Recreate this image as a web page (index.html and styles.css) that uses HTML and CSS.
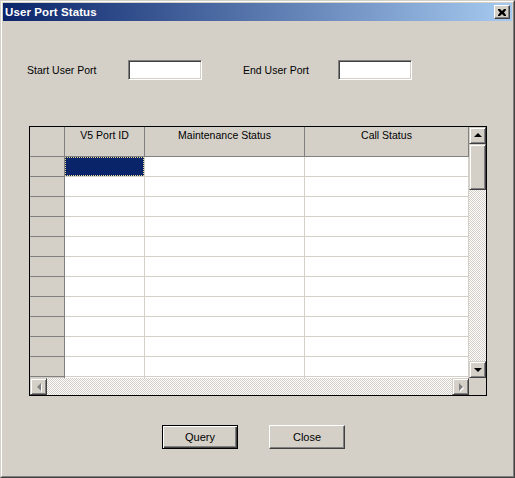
FILE: index.html
```html
<!DOCTYPE html>
<html>
<head>
<meta charset="utf-8">
<link rel="stylesheet" href="styles.css">
</head>
<body>
<div class="window">
  <div class="frame">
    <div class="titlebar">
      <span class="title">User Port Status</span>
      <div class="tclose">
        <svg width="8" height="7" viewBox="0 0 8 7"><path d="M0 0h2l2 2l2-2h2v1l-2 2.5l2 2.5v1h-2l-2-2l-2 2h-2v-1l2-2.5l-2-2.5z" fill="#000"/></svg>
      </div>
    </div>
    <div class="body">
      <div class="form-row">
        <span class="lbl lbl-start">Start User Port</span>
        <div class="input"></div>
        <span class="lbl lbl-end">End User Port</span>
        <div class="input"></div>
      </div>
      <div class="grid">
        <div class="grid-top">
          <div class="cells">
            <div class="row hdr">
              <div class="c c0 fixed"></div>
              <div class="c c1 fixed">V5 Port ID</div>
              <div class="c c2 fixed">Maintenance Status</div>
              <div class="c c3 fixed">Call Status</div>
            </div>
            <div class="row"><div class="c c0 fixed"></div><div class="c c1 sel"><div class="focus"></div></div><div class="c c2"></div><div class="c c3"></div></div>
            <div class="row"><div class="c c0 fixed"></div><div class="c c1"></div><div class="c c2"></div><div class="c c3"></div></div>
            <div class="row"><div class="c c0 fixed"></div><div class="c c1"></div><div class="c c2"></div><div class="c c3"></div></div>
            <div class="row"><div class="c c0 fixed"></div><div class="c c1"></div><div class="c c2"></div><div class="c c3"></div></div>
            <div class="row"><div class="c c0 fixed"></div><div class="c c1"></div><div class="c c2"></div><div class="c c3"></div></div>
            <div class="row"><div class="c c0 fixed"></div><div class="c c1"></div><div class="c c2"></div><div class="c c3"></div></div>
            <div class="row"><div class="c c0 fixed"></div><div class="c c1"></div><div class="c c2"></div><div class="c c3"></div></div>
            <div class="row"><div class="c c0 fixed"></div><div class="c c1"></div><div class="c c2"></div><div class="c c3"></div></div>
            <div class="row"><div class="c c0 fixed"></div><div class="c c1"></div><div class="c c2"></div><div class="c c3"></div></div>
            <div class="row"><div class="c c0 fixed"></div><div class="c c1"></div><div class="c c2"></div><div class="c c3"></div></div>
            <div class="row"><div class="c c0 fixed"></div><div class="c c1"></div><div class="c c2"></div><div class="c c3"></div></div>
            <div class="row"><div class="c c0 fixed"></div><div class="c c1"></div><div class="c c2"></div><div class="c c3"></div></div>
          </div>
          <div class="vscroll">
            <div class="sbtn"><span class="arr up"></span></div>
            <div class="thumb"></div>
            <div class="track"></div>
            <div class="sbtn"><span class="arr down"></span></div>
          </div>
        </div>
        <div class="grid-bottom">
          <div class="hscroll">
            <div class="sbtn"><span class="arr left"></span></div>
            <div class="track"></div>
            <div class="sbtn"><span class="arr right"></span></div>
          </div>
          <div class="corner"></div>
        </div>
      </div>
      <div class="buttons">
        <div class="btn btn-default">Query</div>
        <div class="btn">Close</div>
      </div>
    </div>
  </div>
</div>
</body>
</html>
```
FILE: styles.css
```css
html, body {
  margin: 0;
  padding: 0;
  background: #d4d0c8;
}
body {
  font-family: "Liberation Sans", Arial, sans-serif;
  font-size: 10.5px;
  color: #000;
}
.window {
  width: 515px;
  height: 478px;
  box-sizing: border-box;
  border: 1px solid;
  border-color: #d4d0c8 #404040 #404040 #d4d0c8;
  background: #d4d0c8;
}
.frame {
  height: 100%;
  box-sizing: border-box;
  border: 1px solid;
  border-color: #fff #808080 #808080 #fff;
  padding: 1px;
  display: flex;
  flex-direction: column;
}
.titlebar {
  height: 18px;
  flex: none;
  background: linear-gradient(to right, #0a246a, #a6caf0);
  display: flex;
  align-items: center;
  justify-content: space-between;
  padding: 0 2px;
}
.title {
  color: #fff;
  font-weight: bold;
  font-size: 11.5px;
  letter-spacing: 0.1px;
}
.tclose {
  width: 16px;
  height: 14px;
  box-sizing: border-box;
  background: #d4d0c8;
  border: 1px solid;
  border-color: #fff #404040 #404040 #fff;
  box-shadow: inset -1px -1px #808080;
  display: flex;
  align-items: center;
  justify-content: center;
}
.tclose svg { display: block; margin-left: -1px; }
.body {
  flex: 1;
  display: flex;
  flex-direction: column;
}
.form-row {
  display: flex;
  align-items: center;
  margin-top: 39px;
  height: 20px;
}
.lbl { display: block; }
.lbl-start { margin-left: 24px; width: 101px; }
.lbl-end { margin-left: 41px; width: 95px; }
.input {
  width: 74px;
  height: 20px;
  box-sizing: border-box;
  background: #fff;
  border: 1px solid;
  border-color: #808080 #fff #fff #808080;
  box-shadow: inset 1px 1px #404040, inset -1px -1px #d4d0c8;
}
.grid {
  margin: 46px 0 0 26px;
  width: 458px;
  height: 270px;
  box-sizing: border-box;
  border: 1px solid #000;
  display: flex;
  flex-direction: column;
}
.grid-top {
  display: flex;
  height: 251px;
}
.cells {
  width: 439px;
  height: 251px;
  overflow: hidden;
  background: #fff;
}
.row {
  display: flex;
  height: 20px;
}
.row.hdr { height: 30px; }
.c {
  box-sizing: border-box;
  height: 100%;
  border-right: 1px solid #d4d0c8;
  border-bottom: 1px solid #d4d0c8;
  background: #fff;
}
.c0 { width: 35px; }
.c1 { width: 80px; }
.c2 { width: 160px; }
.c3 { width: 164px; }
.fixed {
  background: #d4d0c8;
  border-right-color: #808080;
  border-bottom-color: #808080;
  text-align: center;
  padding-top: 2px;
}
.sel { background: #0a246a; }
.focus {
  height: 100%;
  box-sizing: border-box;
  border: 1px dotted #e8d890;
}
.vscroll {
  width: 17px;
  display: flex;
  flex-direction: column;
}
.sbtn {
  width: 17px;
  height: 17px;
  flex: none;
  box-sizing: border-box;
  background: #d4d0c8;
  border: 1px solid;
  border-color: #d4d0c8 #404040 #404040 #d4d0c8;
  box-shadow: inset 1px 1px #fff, inset -1px -1px #808080;
  display: flex;
  align-items: center;
  justify-content: center;
}
.thumb {
  height: 46px;
  flex: none;
  box-sizing: border-box;
  background: #d4d0c8;
  border: 1px solid;
  border-color: #d4d0c8 #404040 #404040 #d4d0c8;
  box-shadow: inset 1px 1px #fff, inset -1px -1px #808080;
}
.track {
  flex: 1;
  background: repeating-conic-gradient(#d4d0c8 0 25%, #fff 0 50%) 0 0 / 2px 2px;
}
.arr {
  width: 0;
  height: 0;
  display: block;
}
.arr.up {
  border-left: 4px solid transparent;
  border-right: 4px solid transparent;
  border-bottom: 4px solid #000;
  margin-top: -1px;
}
.arr.down {
  border-left: 4px solid transparent;
  border-right: 4px solid transparent;
  border-top: 4px solid #000;
}
.arr.left {
  border-top: 4px solid transparent;
  border-bottom: 4px solid transparent;
  border-right: 4px solid #808080;
  filter: drop-shadow(1px 1px 0 #fff);
}
.arr.right {
  border-top: 4px solid transparent;
  border-bottom: 4px solid transparent;
  border-left: 4px solid #808080;
  filter: drop-shadow(1px 1px 0 #fff);
}
.grid-bottom {
  display: flex;
  height: 17px;
}
.hscroll {
  width: 439px;
  display: flex;
}
.corner {
  width: 17px;
  background: #d4d0c8;
}
.buttons {
  display: flex;
  margin: 29px 0 0 159px;
  gap: 31px;
}
.btn {
  width: 76px;
  height: 24px;
  box-sizing: border-box;
  border: 1px solid;
  border-color: #fff #404040 #404040 #fff;
  box-shadow: inset -1px -1px #808080;
  display: flex;
  align-items: center;
  justify-content: center;
  font-size: 11px;
}
.btn-default {
  border: 1px solid #000;
  box-shadow: inset 1px 1px #fff, inset -1px -1px #404040, inset -2px -2px #808080;
}
```
